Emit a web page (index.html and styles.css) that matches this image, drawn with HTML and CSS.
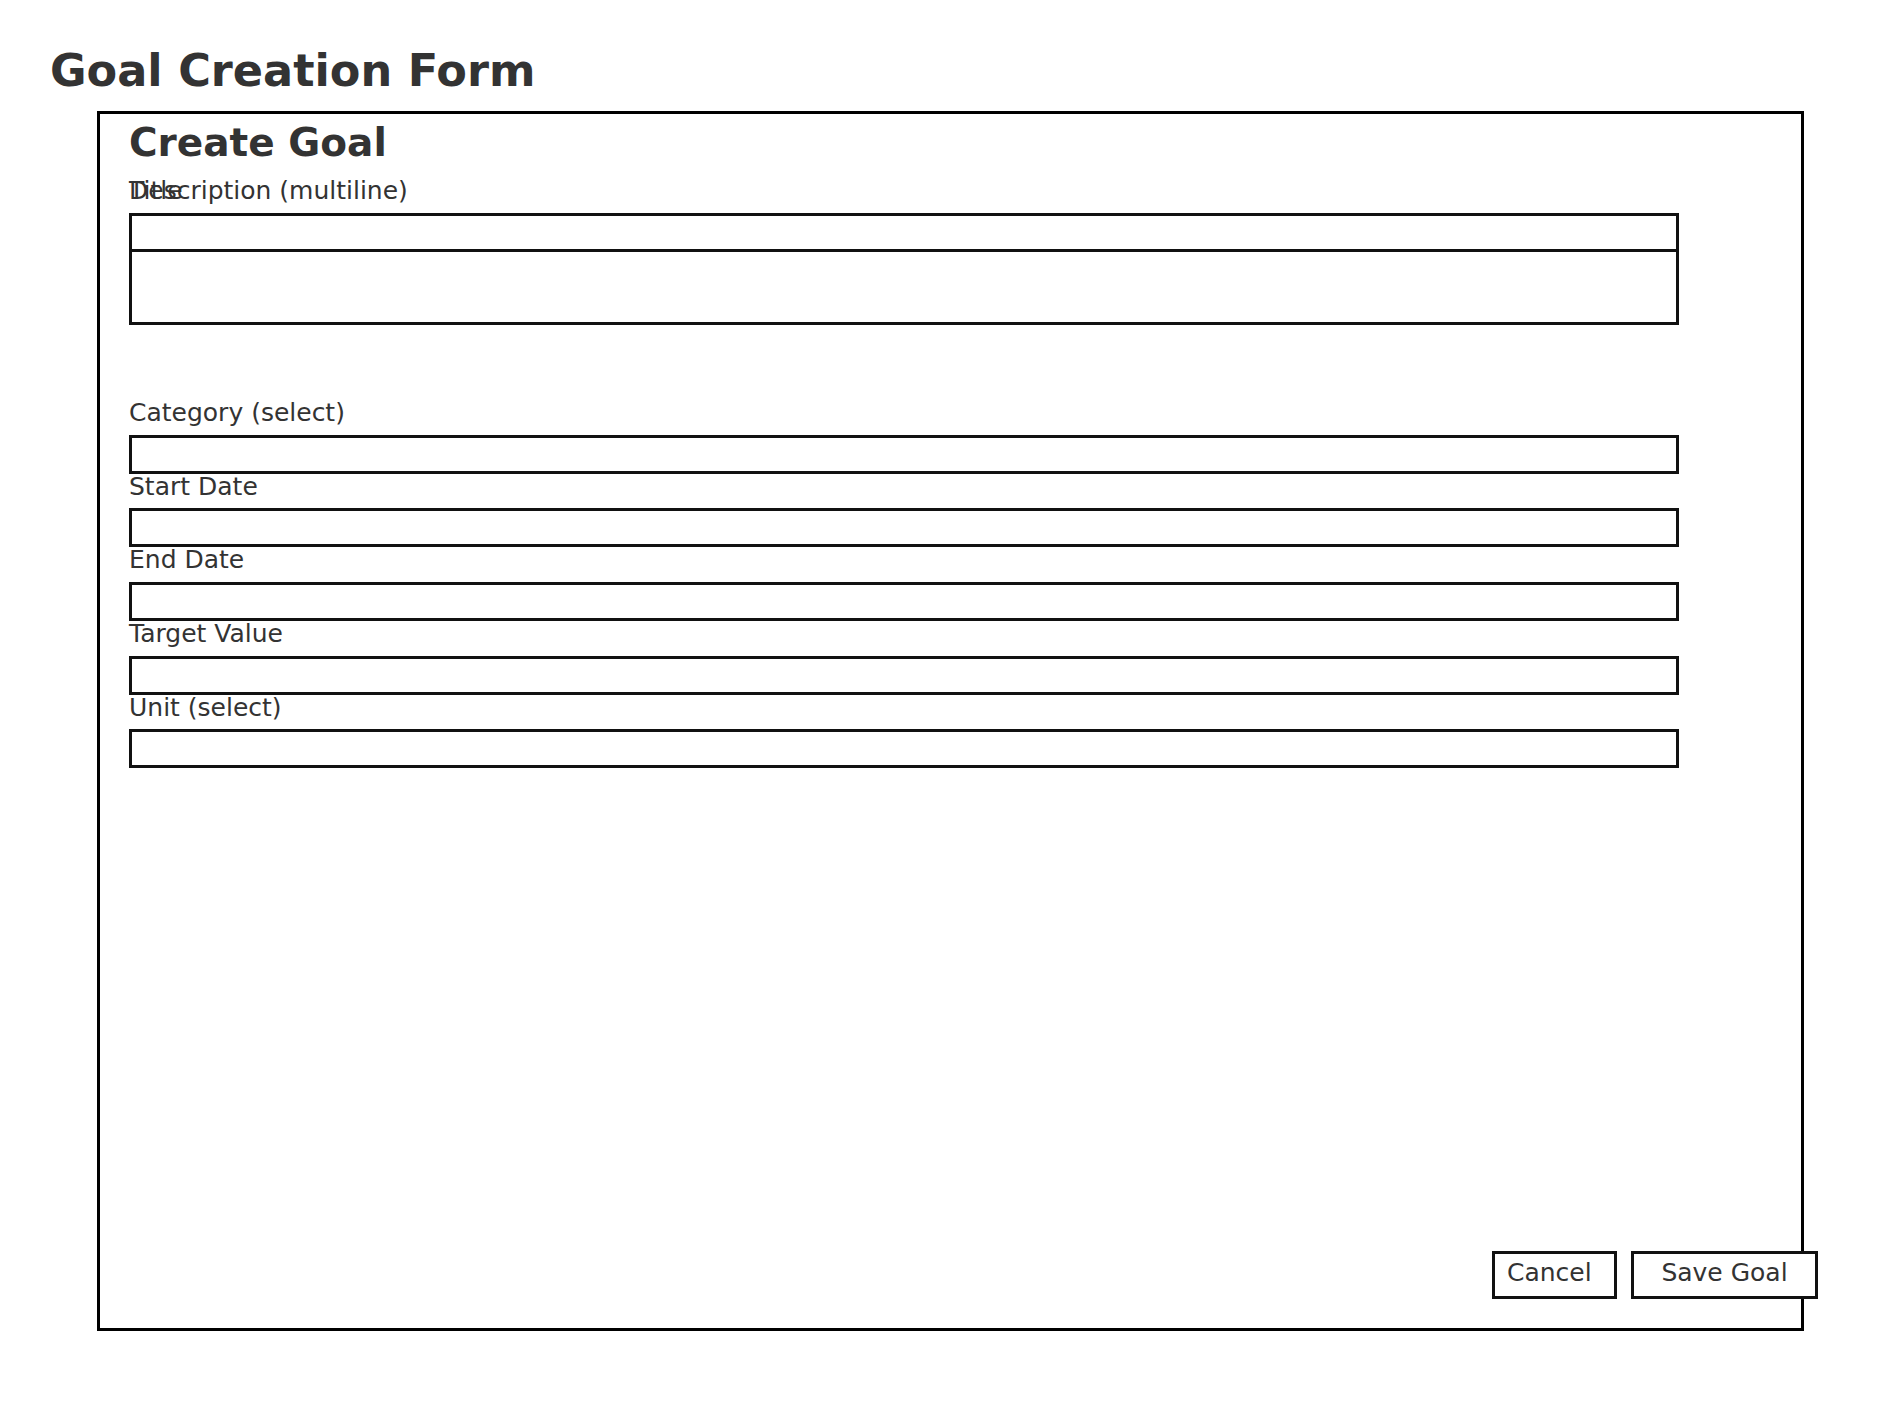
FILE: index.html
```html
<!DOCTYPE html>
<html lang="en">
<head>
<meta charset="utf-8">
<title>Goal Creation Form</title>
<link rel="stylesheet" href="styles.css">
</head>
<body>
<div class="page">
  <h1 class="page-title">Goal Creation Form</h1>
  <form class="goal-box">
    <h2 class="box-title">Create Goal</h2>
    <div class="top-fields">
      <label class="lbl lbl-stack">Title</label>
      <label class="lbl lbl-stack">Description (multiline)</label>
      <input class="inp" type="text">
      <textarea class="inp area"></textarea>
    </div>
    <div class="field">
      <label class="lbl">Category (select)</label>
      <div class="inp"></div>
    </div>
    <div class="field">
      <label class="lbl">Start Date</label>
      <div class="inp"></div>
    </div>
    <div class="field">
      <label class="lbl">End Date</label>
      <div class="inp"></div>
    </div>
    <div class="field">
      <label class="lbl">Target Value</label>
      <div class="inp"></div>
    </div>
    <div class="field">
      <label class="lbl">Unit (select)</label>
      <div class="inp"></div>
    </div>
    <div class="actions">
      <button type="button" class="btn btn-cancel">Cancel</button>
      <button type="button" class="btn btn-save">Save Goal</button>
    </div>
  </form>
</div>
</body>
</html>
```
FILE: styles.css
```css
html, body {
  margin: 0;
  padding: 0;
  background: #fff;
}
body {
  font-family: "DejaVu Sans", "Liberation Sans", sans-serif;
  color: #333;
}
.page {
  padding: 46px 0 0 50px;
}
.page-title {
  margin: 0 0 14px 0;
  font-size: 44.6px;
  line-height: 51.2px;
  font-weight: bold;
  color: #333;
}
.goal-box {
  box-sizing: border-box;
  margin: 0 0 0 47px;
  width: 1707px;
  height: 1220px;
  border: 3px solid #000;
  padding: 6px 29px 29.5px 29px;
  display: flex;
  flex-direction: column;
  align-items: flex-start;
}
.box-title {
  margin: 0 0 13px 0;
  font-size: 39px;
  line-height: normal;
  font-weight: bold;
  color: #333;
}
.lbl {
  display: block;
  font-size: 25px;
  line-height: 25px;
  margin-bottom: 9.6px;
  color: #333;
}
.top-fields {
  display: grid;
  grid-template-columns: 1550px;
  margin-bottom: 75.5px;
}
.lbl-stack {
  grid-area: 1 / 1;
}
.inp {
  box-sizing: border-box;
  display: block;
  width: 1550px;
  height: 39px;
  border: 3px solid #111;
  background: #fff;
  margin: 0;
  padding: 0;
  font: inherit;
}
.area {
  height: 76px;
  margin-top: -3px;
  resize: none;
}
.field {
  display: flex;
  flex-direction: column;
}
.actions {
  margin-top: auto;
  align-self: stretch;
  margin-right: -46px;
  display: flex;
  justify-content: flex-end;
  gap: 14px;
}
.btn {
  box-sizing: border-box;
  height: 48px;
  border: 3px solid #111;
  background: #fff;
  color: #333;
  font-family: "DejaVu Sans", "Liberation Sans", sans-serif;
  font-size: 25px;
  line-height: 29px;
  padding: 4px 0 9px 0;
  margin: 0;
  border-radius: 0;
}
.btn-cancel {
  width: 125px;
  text-align: left;
  padding-left: 12px;
}
.btn-save {
  width: 187px;
  text-align: center;
}
```
